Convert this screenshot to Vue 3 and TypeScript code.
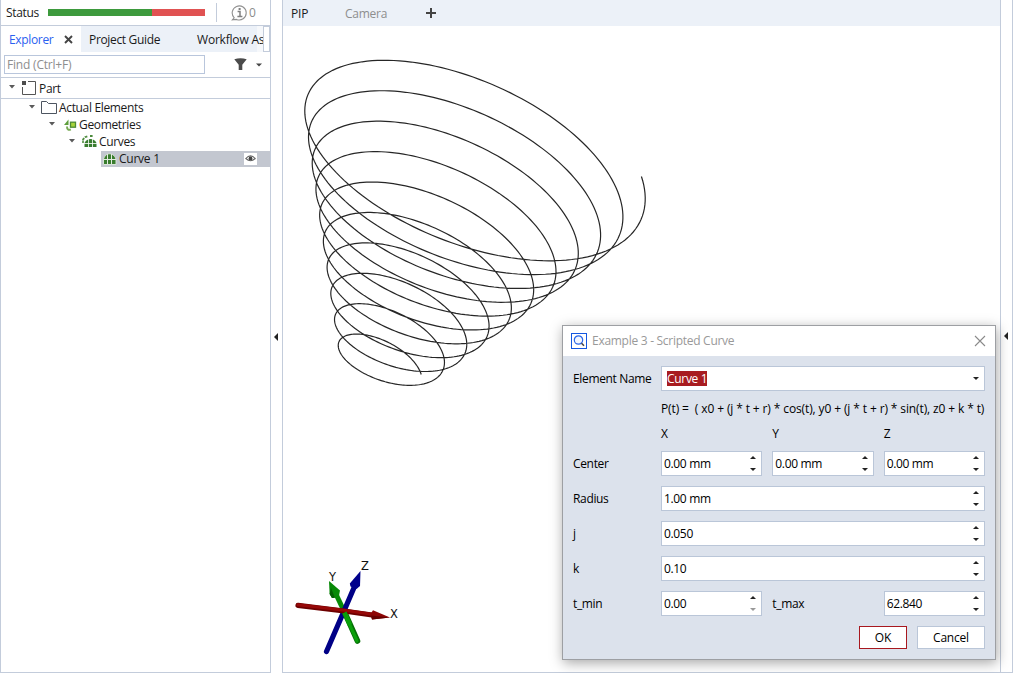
<script setup lang="ts">
interface TreeRow {
  label: string
  level: number
  icon: 'part' | 'folder' | 'geometries' | 'curves' | 'curve'
  leaf?: boolean
}

const rows: TreeRow[] = [
  { label: 'Part', level: 0, icon: 'part' },
  { label: 'Actual Elements', level: 1, icon: 'folder' },
  { label: 'Geometries', level: 2, icon: 'geometries' },
  { label: 'Curves', level: 3, icon: 'curves' },
  { label: 'Curve 1', level: 4, icon: 'curve', leaf: true },
]

// Conical spiral in an orthographic view: screen vectors of the three axes.
const origin = [381.4, 369.8]
const ax = [40.4, 7]
const ay = [-9.2, -25.5]
const az = [14.8, -35.24]

function spiral(tMin: number, tMax: number, r: number, j: number, k: number): string {
  const steps = 1600
  const pts: string[] = []
  for (let i = 0; i <= steps; i++) {
    const t = tMin + ((tMax - tMin) * i) / steps
    const u = (j * t + r) * Math.cos(t)
    const v = (j * t + r) * Math.sin(t)
    const w = k * t
    const x = origin[0] + u * ax[0] + v * ay[0] + w * az[0]
    const y = origin[1] + u * ax[1] + v * ay[1] + w * az[1]
    pts.push(`${(x - 283).toFixed(2)},${(y - 26).toFixed(2)}`)
  }
  return pts.join(' ')
}
const curve = spiral(0.08, 62.84, 1, 0.05, 0.1)

const center = ['0.00 mm', '0.00 mm', '0.00 mm']
const scalars = [
  { label: 'Radius', value: '1.00 mm' },
  { label: 'j', value: '0.050' },
  { label: 'k', value: '0.10' },
]
</script>

<template>
  <div class="app">
    <aside class="panel">
      <div class="status">
        <span class="status-label">Status</span>
        <div class="bar"><i class="done"></i><i class="rest"></i></div>
        <div class="info">
          <svg width="17" height="16" viewBox="0 0 17 16">
            <path d="M3.2 12.8 A7 7 0 1 1 5.6 14.4 L1.4 14.9 Z" fill="none" stroke="#909090" stroke-width="1.1" />
            <path d="M6.600 6.500h2.400v5M6.400 11.500h5" fill="none" stroke="#808080" stroke-width="1.5" />
            <rect x="7.600" y="3" width="2" height="2" fill="#808080" />
          </svg>
          <span>0</span>
        </div>
      </div>
      <div class="tabs">
        <div class="tab active">
          <span>Explorer</span>
          <svg width="9" height="9" viewBox="0 0 9 9"><path d="M1 1L8 8M8 1L1 8" stroke="#444" stroke-width="1.9" /></svg>
        </div>
        <div class="tab guide">Project Guide</div>
        <div class="tab flow">Workflow As</div>
        <div class="scroller"></div>
      </div>
      <div class="find">
        <div class="search">Find (Ctrl+F)</div>
        <svg class="funnel" width="13" height="13" viewBox="0 0 13 13"><path d="M0.3 1.2Q6.5-.6 12.7 1.2L8.3 6.8V12H4.7V6.8Z" fill="#4b4b4b" /></svg>
        <svg class="drop" width="6" height="4" viewBox="0 0 6 4"><path d="M0 .5H6L3 3.5Z" fill="#444" /></svg>
      </div>
      <div class="tree">
        <div v-for="row in rows" :key="row.label" class="row" :class="['lv' + row.level]">
          <svg v-if="!row.leaf" class="arrow" width="6" height="4" viewBox="0 0 6 4"><path d="M0 0H6L3 3.6Z" fill="#5a5a5a" /></svg>
          <div class="item">
            <svg v-if="row.icon === 'part'" class="ic" width="16" height="15" viewBox="0 0 16 15">
              <path d="M6 .5H13.5V13.5H.5V6" fill="none" stroke="#555" />
              <rect x="0" y="0" width="4" height="4" fill="#4d4d4d" />
            </svg>
            <svg v-else-if="row.icon === 'folder'" class="ic" width="17" height="13" viewBox="0 0 17 13">
              <path d="M.5 12.500V.5H5.500L7.500 2.500H15.500V12.500Z" fill="#fff" stroke="#4d5560" />
            </svg>
            <svg v-else-if="row.icon === 'geometries'" class="ic" width="13" height="12" viewBox="0 0 13 12">
              <path d="M0 6L4.500 .5V6Z" fill="#5d9e3c" />
              <path d="M3 7.5C3 10.5 4.5 11.5 6.8 10.4" fill="none" stroke="#78ab55" stroke-width="2" />
              <rect x="6.500" y="3.200" width="5" height="5" fill="#a7d33b" stroke="#4c8a35" stroke-width="1.3" />
            </svg>
            <svg v-else-if="row.icon === 'curves'" class="ic" width="15" height="13" viewBox="0 0 15 13">
              <path d="M.5 5L3 2.200L6 1.200M8 1H11.500" fill="none" stroke="#4d8b3d" stroke-width="1.800" stroke-dasharray="2.600 1" />
              <path d="M2.500 12V8C4 5 6 4 8.500 4S13 5 14.500 8V12Z" fill="#397c2e" />
              <path d="M6.500 4V12M10.500 4V12M2 8.500H15" stroke="#fff" stroke-width=".8" />
              <path d="M1 5.500V8" stroke="#4d8b3d" stroke-width="1.600" />
            </svg>
            <svg v-else class="ic" width="14" height="12" viewBox="0 0 14 12">
              <path d="M.5 11.5V6C2 2.200 4 .8 6.500 .8S11.500 2.200 13 6V11.500Z" fill="#397c2e" stroke="#d9e4d8" />
              <path d="M4.500 1V11M8.500 1V11M1 6.500H13" stroke="#e2ebdf" />
            </svg>
            <span>{{ row.label }}</span>
            <span v-if="row.leaf" class="eye">
              <svg width="11" height="9" viewBox="0 0 11 9">
                <path d="M.8 4.500Q5.500-.8 10.200 4.500Q5.500 9 .8 4.500Z" fill="#fff" stroke="#666" stroke-width="1.100" />
                <circle cx="5.500" cy="4.400" r="1.900" fill="#444" />
              </svg>
            </span>
          </div>
        </div>
      </div>
    </aside>

    <div class="splitter">
      <svg width="4" height="8" viewBox="0 0 4 8"><path d="M4 0V8L0 4Z" fill="#222" /></svg>
    </div>

    <main class="view">
      <div class="viewtabs">
        <span class="pip">PIP</span>
        <span class="camera">Camera</span>
        <svg width="10" height="10" viewBox="0 0 10 10"><path d="M5 0V10M0 5H10" stroke="#444" stroke-width="2" /></svg>
      </div>
      <svg class="scene" width="717" height="646" viewBox="0 0 717 646">
        <polyline :points="curve" fill="none" stroke="#000" stroke-opacity=".85" stroke-width="1.2" />
        <g transform="translate(-283 -26)">
          <path d="M344 611L333.5 589" stroke="#078a07" stroke-width="5" />
          <path d="M329 581L340 590.5L339 595.5L332 598L329.6 594Z" fill="#088a08" />
          <path d="M331 588L335 598L332 598L329.6 594Z" fill="#046004" />
          <path d="M326.500 651.500L344 611L356 583" stroke="#000086" stroke-width="5.200" stroke-linecap="round" fill="none" />
          <path d="M360.500 571L360 586L356.500 589L350.500 586.500L349.800 583.500Z" fill="#00008c" />
          <path d="M344.500 612L357.500 641" stroke="#056f05" stroke-width="5.600" stroke-linecap="round" />
          <path d="M344 612L357 641" stroke="#0aa00a" stroke-width="3.200" stroke-linecap="round" />
          <path d="M298 605.400L344 611L372 615" stroke="#6d0000" stroke-width="5.200" stroke-linecap="round" fill="none" />
          <path d="M298 604.800L344 610.300L372 614.200" stroke="#960808" stroke-width="3" stroke-linecap="round" fill="none" />
          <path d="M390 617.500L373 610.300L370.500 614L372 619.400Z" fill="#8e0505" />
          <path d="M390 617.500L371 615.500L372 619.400Z" fill="#600" />
          <path d="M344.500 612.500L350 625" stroke="#0aa00a" stroke-width="4.500" />
          <text x="390" y="618">X</text>
          <text x="329" y="580.500">Y</text>
          <text x="361" y="570">Z</text>
        </g>
      </svg>
    </main>

    <div class="splitter right">
      <svg width="4" height="8" viewBox="0 0 4 8"><path d="M4 0V8L0 4Z" fill="#222" /></svg>
    </div>

    <section class="dialog">
      <header>
        <svg width="16" height="16" viewBox="0 0 16 16">
          <rect x=".5" y=".5" width="15" height="15" fill="#fff" stroke="#1457e0" />
          <circle cx="7.500" cy="7" r="4.200" fill="#f3f7ff" stroke="#2a66e8" stroke-width="1.200" />
          <path d="M10.500 10.200L13 12.800" stroke="#444" stroke-width="1.600" />
        </svg>
        <span class="title">Example 3 - Scripted Curve</span>
        <svg class="close" width="12" height="12" viewBox="0 0 12 12"><path d="M1 1L11 11M11 1L1 11" stroke="#8a8a8a" stroke-width="1.100" /></svg>
      </header>
      <div class="form">
        <label>Element Name</label>
        <div class="field combo wide">
          <mark>Curve 1</mark>
          <svg width="6" height="3" viewBox="0 0 6 3"><path d="M0 0H6L3 3Z" fill="#222" /></svg>
        </div>
        <div class="formula">P(t) =&nbsp; ( x0 + (j * t + r) * cos(t), y0 + (j * t + r) * sin(t), z0 + k * t)</div>
        <span class="axis first">X</span>
        <span class="axis">Y</span>
        <span class="axis">Z</span>
        <label>Center</label>
        <div v-for="(c, i) in center" :key="i" class="field">
          <span>{{ c }}</span>
          <svg class="spin" width="6" height="15" viewBox="0 0 6 15"><path d="M0 3H6L3 0Z" fill="#222" /><path d="M0 12H6L3 15Z" fill="#222" /></svg>
        </div>
        <template v-for="s in scalars" :key="s.label">
          <label>{{ s.label }}</label>
          <div class="field wide">
            <span>{{ s.value }}</span>
            <svg class="spin" width="6" height="15" viewBox="0 0 6 15"><path d="M0 3H6L3 0Z" fill="#222" /><path d="M0 12H6L3 15Z" fill="#222" /></svg>
          </div>
        </template>
        <label>t_min</label>
        <div class="field">
          <span>0.00</span>
          <svg class="spin" width="6" height="15" viewBox="0 0 6 15"><path d="M0 3H6L3 0Z" fill="#222" /><path d="M0 12H6L3 15Z" fill="#999" /></svg>
        </div>
        <label>t_max</label>
        <div class="field">
          <span>62.840</span>
          <svg class="spin" width="6" height="15" viewBox="0 0 6 15"><path d="M0 3H6L3 0Z" fill="#222" /><path d="M0 12H6L3 15Z" fill="#222" /></svg>
        </div>
      </div>
      <footer>
        <button class="ok">OK</button>
        <button class="cancel">Cancel</button>
      </footer>
    </section>
  </div>
</template>

<style>
body { margin: 0; background: #fff; }
</style>

<style scoped>
* { box-sizing: border-box; }
.app {
  position: relative; display: flex; width: 1013px; height: 673px; overflow: hidden;
  font: 12px/16px "Open Sans", "Noto Sans", sans-serif; color: #1a1a1a; background: #fff; white-space: nowrap;
  letter-spacing: -0.34px;
}
svg { display: block; flex: none; }
.panel { width: 271px; border: solid #c3ccdb; border-width: 0 1px 1px; }
.status { display: flex; align-items: center; height: 26px; padding-left: 5px; border-bottom: 1px solid #c3ccdb; }
.status-label { width: 42px; }
.bar { display: flex; width: 157px; height: 7px; }
.done { width: 104px; background: #3d9a3d; }
.rest { flex: 1; background: #e05252; }
.info { display: flex; align-items: center; gap: 1px; height: 19px; margin-left: 11px; padding-left: 14px; border-left: 1px solid #c3ccdb; color: #8c8c8c; }
.tabs { display: flex; align-items: center; height: 26px; background: #ecf1f8; }
.tab { line-height: 28px; height: 26px; }
.active { display: flex; align-items: center; justify-content: space-between; width: 80px; padding: 0 8px; background: #fff; color: #2b5ff0; }
.active span { padding-top: 2px; }
.guide { width: 108px; padding-left: 8px; }
.flow {
  width: 74px; padding-left: 8px; overflow: hidden; letter-spacing: -0.2px;
  background: linear-gradient(90deg, transparent 68px, #f6f8fb 68px);
}
.scroller { width: 7px; height: 26px; background: #fff; border: 1px solid #c3ccdb; }
.find { display: flex; align-items: center; height: 26px; padding-left: 3px; border-bottom: 1px solid #c3ccdb; }
.search { width: 201px; height: 19px; padding-left: 2px; line-height: 18px; border: 1px solid #b9c6dc; color: #8e8e8e; letter-spacing: -0.2px; }
.funnel { margin-left: 29px; }
.drop { margin-left: 9px; }
.row { display: flex; align-items: center; height: 17px; }
.lv0 { height: 21px; padding-left: 8px; border-bottom: 1px solid #c3ccdb; }
.lv0 .item { padding-top: 1px; }
.lv1 { padding-left: 28px; }
.lv2 { padding-left: 48px; }
.lv3 { padding-left: 68px; }
.lv4 { padding-left: 100px; letter-spacing: -0.25px; }
.arrow { margin: 0 7px 2px 0; }
.item { display: flex; align-items: center; flex: 1; height: 16px; }
.ic { margin-right: 1px; }
.lv1 .ic { margin: 0 1px 0 -1px; }
.lv2 .ic { margin: 0 2px 0 2px; }
.lv3 .ic { margin-right: 2px; }
.lv4 .ic { margin-right: 2px; }
.lv4 .item { padding-left: 2px; background: #c3c7d0; }
.eye { display: flex; align-items: center; justify-content: center; width: 13px; height: 12px; margin: 0 13px 0 auto; background: #fff; }
.splitter { display: flex; align-items: center; width: 11px; padding-left: 3px; }
.splitter.right { width: 12px; border: solid #c3ccdb; border-width: 0 1px 1px 0; }
.view { width: 719px; border: solid #c3ccdb; border-width: 0 1px 1px; }
.viewtabs { display: flex; align-items: center; height: 26px; padding-left: 8px; background: #ecf1f8; }
.viewtabs span { padding-top: 1px; }
.pip { width: 54px; letter-spacing: -0.2px; }
.camera { width: 81px; color: #8e8e8e; letter-spacing: -0.25px; }
.scene text { font: 11.5px "DejaVu Sans", sans-serif; letter-spacing: 0; fill: #111; }
.dialog {
  position: absolute; left: 562px; top: 325px; width: 434px; height: 335px;
  border: 1px solid #9d9fa3; background: #dce2ec; box-shadow: 1px 3px 12px rgba(0, 0, 0, .35); color: #000;
}
header { display: flex; align-items: center; height: 30px; padding: 0 9px 0 8px; background: #fff; color: #999; }
.title { margin-left: 5px; letter-spacing: -0.28px; }
.close { margin-left: auto; }
.form { display: grid; grid-template-columns: 78px 1fr 1fr 1fr; grid-template-rows: 25px 16px 14px repeat(5, 25px); gap: 10px; padding: 10px 10px 0; align-items: center; }
.field { display: flex; align-items: center; justify-content: space-between; height: 25px; padding: 0 5px 0 2px; background: #fff; border: 1px solid #bac6d8; }
.wide { grid-column: span 3; }
.combo { padding-left: 5px; letter-spacing: -0.3px; }
mark { background: #a81c20; color: #fff; height: 15px; line-height: 15px; }
.formula { grid-column: 2 / span 3; letter-spacing: -0.12px; }
.axis.first { grid-column: 2; }
footer { display: flex; justify-content: flex-end; gap: 10px; padding: 10px 10px 0; }
button { height: 23px; padding: 0; background: #fff; border: 1px solid #bac6d8; font: inherit; letter-spacing: -0.2px; color: #000; }
.ok { width: 48px; border-color: #a8181f; }
.cancel { width: 68px; }
</style>
